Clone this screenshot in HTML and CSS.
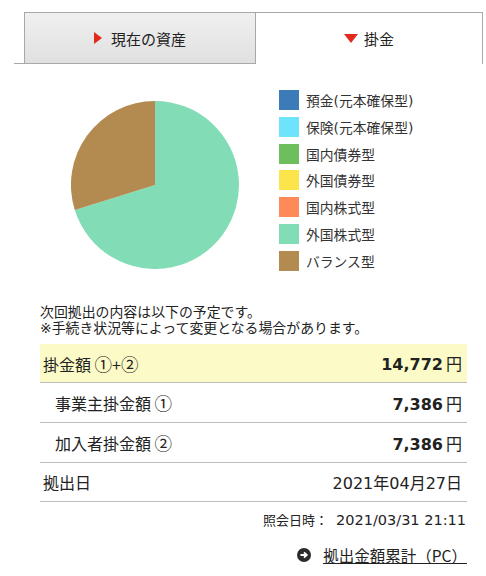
FILE: index.html
```html
<!DOCTYPE html>
<html>
<head>
	<title>掛金</title>
	<link rel="stylesheet" href="styles.css">
</head>
<body>
	<div class="tabs">
		<div class="tab"><span class="arrow-right"></span>現在の資産</div>
		<div class="tab active"><span class="arrow-down"></span>掛金</div>
	</div>

	<div class="chart">
		<svg class="pie" width="168" height="168" viewBox="0 0 168 168">
			<path d="M84,84 L84,0 A84,84 0 1,1 3.8,109.1 Z" fill="#82dcb5"/>
			<path d="M84,84 L3.8,109.1 A84,84 0 0,1 84,0 Z" fill="#b38b50"/>
		</svg>
		<ul class="legend">
			<li><span class="swatch" style="background:#3d7ab8"></span>預金(元本確保型)</li>
			<li><span class="swatch" style="background:#6de3fc"></span>保険(元本確保型)</li>
			<li><span class="swatch" style="background:#6dbf5e"></span>国内債券型</li>
			<li><span class="swatch" style="background:#fce54a"></span>外国債券型</li>
			<li><span class="swatch" style="background:#fd8a57"></span>国内株式型</li>
			<li><span class="swatch" style="background:#82dcb5"></span>外国株式型</li>
			<li><span class="swatch" style="background:#b38b50"></span>バランス型</li>
		</ul>
	</div>

	<div class="note">
		<div class="note-line">次回拠出の内容は以下の予定です。</div>
		<div class="note-line">※手続き状況等によって変更となる場合があります。</div>
	</div>

	<div class="amounts">
		<div class="row total">
			<span class="label">掛金額 <span class="circ">①</span>+<span class="circ">②</span></span>
			<span class="value"><b>14,772</b>円</span>
		</div>
		<div class="row sub">
			<span class="label">事業主掛金額 <span class="circ">①</span></span>
			<span class="value"><b>7,386</b>円</span>
		</div>
		<div class="row sub">
			<span class="label">加入者掛金額 <span class="circ">②</span></span>
			<span class="value"><b>7,386</b>円</span>
		</div>
		<div class="row">
			<span class="label">拠出日</span>
			<span class="date">2021年04月27日</span>
		</div>
	</div>

	<div class="inquiry">照会日時：<span class="stamp">2021/03/31 21:11</span></div>

	<div class="links">
		<a href="#" class="link">
			<svg class="go" width="14" height="14" viewBox="0 0 14 14">
				<circle cx="7" cy="7" r="7" fill="#2b2b2b"/>
				<path d="M3.5,7 H9.5 M7,4.3 L9.8,7 L7,9.7" stroke="#fff" stroke-width="1.8" fill="none"/>
			</svg>
			<span class="link-text">拠出金額累計（PC）</span>
		</a>
	</div>
</body>
</html>
```

FILE: styles.css
```css
body {
	margin: 0;
	padding: 0;
	background-color: #FFFFFF;
	color: #222222;
	font-family: "DejaVu Sans", "Noto Sans CJK JP", sans-serif;
}

.tabs {
	display: flex;
	margin: 12px 3px 0 14px;
}

.tabs::before {
	content: "";
	width: 10px;
	border-bottom: 1px solid #a8a8a8;
}

.tab {
	display: flex;
	justify-content: center;
	align-items: center;
	height: 50px;
	width: 230px;
	border: 1px solid #a8a8a8;
	background: linear-gradient(#f0f0f0, #e0e0e0);
	font-family: "Noto Sans CJK JP", sans-serif;
	font-size: 15px;
	color: #222222;
}

.tab.active {
	width: 226px;
	border-left: none;
	border-bottom: none;
	height: 51px;
	background: #FFFFFF;
}

.arrow-right {
	width: 0;
	height: 0;
	border-top: 6px solid transparent;
	border-bottom: 6px solid transparent;
	border-left: 8px solid #e3281d;
	margin-right: 9px;
}

.arrow-down {
	width: 0;
	height: 0;
	border-left: 7px solid transparent;
	border-right: 7px solid transparent;
	border-top: 9px solid #e3281d;
	margin-right: 6px;
}

.chart {
	display: flex;
	padding: 26px 0 0 71px;
	height: 214px;
}

.pie {
	margin-top: 11px;
}

.legend {
	list-style: none;
	margin: 0 0 0 40px;
	padding: 0;
	display: flex;
	flex-direction: column;
	gap: 6.8px;
}

.legend li {
	display: flex;
	align-items: center;
	height: 20px;
	font-size: 13.8px;
	color: #333333;
}

.swatch {
	width: 20px;
	height: 20px;
	margin-right: 7px;
}

.note {
	margin: 0 0 8px 40px;
	font-family: "DejaVu Sans", "Noto Sans CJK JP", sans-serif;
	font-size: 13.9px;
	color: #222222;
}

.note-line {
	height: 16px;
	line-height: 16px;
}

.amounts {
	margin: 0 19px 0 40px;
}

.row {
	display: flex;
	justify-content: space-between;
	align-items: center;
	height: 38px;
	border-bottom: 1px solid #bdbdbd;
	padding: 0 5px 0 3px;
	font-size: 16px;
}

.row.total {
	background-color: #fcfbc8;
}

.row.sub {
	height: 39px;
	padding-left: 15px;
}

.label {
	font-family: "Noto Sans CJK JP", sans-serif;
}

.circ {
	font-size: 17.5px;
}

.value b {
	font-size: 16px;
	margin-right: 3px;
}

.value {
	font-family: "DejaVu Sans", "Noto Sans CJK JP", sans-serif;
}

.date {
	font-size: 16px;
}

.inquiry {
	display: flex;
	justify-content: flex-end;
	align-items: baseline;
	margin: 8px 20px 0 0;
	font-family: "Noto Sans CJK JP", sans-serif;
	font-size: 13px;
	color: #222222;
}

.stamp {
	font-family: "DejaVu Sans", sans-serif;
	font-size: 14.5px;
	margin-left: 8px;
}

.links {
	display: flex;
	justify-content: flex-end;
	margin: 15px 19px 0 0;
}

.link {
	display: flex;
	align-items: center;
	color: #222222;
	font-family: "Noto Sans CJK JP", sans-serif;
	font-size: 15.5px;
}

.go {
	margin-right: 12px;
}

.link-text {
	text-decoration: underline;
}
```
